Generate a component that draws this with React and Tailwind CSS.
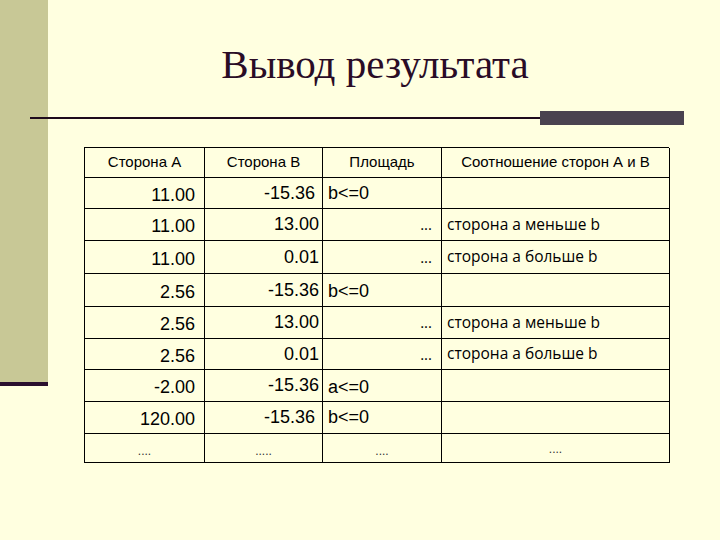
const rows = [
  { h: 'h-[31px]', a: '11.00', b: '-15.36', bPad: 'pr-[7px]', c: 'b<=0', cPad: 'pt-0', d: '' },
  { h: 'h-[32px]', a: '11.00', b: '13.00', bPad: 'pr-[3px]', c: '...', d: 'сторона а меньше b' },
  { h: 'h-[33px]', a: '11.00', b: '0.01', bPad: 'pr-[3px]', c: '...', d: 'сторона а больше b' },
  { h: 'h-[33px]', a: '2.56', b: '-15.36', bPad: 'pr-[3px]', c: 'b<=0', cPad: 'pt-[3px]', d: '' },
  { h: 'h-[32px]', a: '2.56', b: '13.00', bPad: 'pr-[3px]', c: '...', d: 'сторона а меньше b' },
  { h: 'h-[31px]', a: '2.56', b: '0.01', bPad: 'pr-[3px]', c: '...', d: 'сторона а больше b' },
  { h: 'h-[32px]', a: '-2.00', b: '-15.36', bPad: 'pr-[3px]', c: 'a<=0', cPad: 'pt-[3px]', d: '' },
  { h: 'h-[32px]', a: '120.00', b: '-15.36', bPad: 'pr-[7px]', c: 'b<=0', cPad: 'pt-0', d: '' },
];

const cell = 'border-r border-b border-black flex items-center';

function DataRow({ r }) {
  const isDots = r.c === '...';
  return (
    <>
      <div className={`${cell} ${r.h} justify-end pr-[9px] pt-[4px] text-[18px]`}>{r.a}</div>
      <div className={`${cell} ${r.h} justify-end ${r.bPad} text-[18px]`}>{r.b}</div>
      {isDots ? (
        <div className={`${cell} ${r.h} justify-end pr-[9px] font-['Open_Sans',sans-serif] text-[15px]`}>...</div>
      ) : (
        <div className={`${cell} ${r.h} pl-[5px] ${r.cPad} text-[18px]`}>{r.c}</div>
      )}
      <div className={`${cell} ${r.h} pl-[5px] font-['Open_Sans',sans-serif] text-[15.5px]`}>{r.d}</div>
    </>
  );
}

export default function App() {
  return (
    <div className="flex h-[540px] w-[720px] overflow-hidden bg-[#ffffe0] font-['Liberation_Sans',Arial,sans-serif] text-black">
      <aside className="flex w-[48px] shrink-0 flex-col">
        <div className="h-[382px] bg-[#c8c896]" />
        <div className="h-[4px] bg-[#2a0f2e]" />
      </aside>

      <main className="flex min-w-0 flex-1 flex-col">
        <h1 className="-ml-[18px] mt-[42px] text-center font-['Liberation_Serif','Times_New_Roman',serif] text-[41px] leading-[44px] text-[#2a0c26]">
          Вывод результата
        </h1>

        <div className="-ml-[18px] mt-[25px] flex h-[14px] items-center">
          <div className="h-[2px] w-[510px] bg-[#1e0a1c]" />
          <div className="h-[14px] w-[144px] bg-[#4a4250]" />
        </div>

        <div className="ml-[36px] mt-[22px] grid w-[585px] grid-cols-[120px_118px_119px_228px] border-l border-t border-black">
          <div className={`${cell} h-[30px] justify-center text-[15px]`}>Сторона А</div>
          <div className={`${cell} h-[30px] justify-center text-[15px]`}>Сторона В</div>
          <div className={`${cell} h-[30px] justify-center text-[15px]`}>Площадь</div>
          <div className={`${cell} h-[30px] justify-center text-[15px]`}>Соотношение сторон А и В</div>

          {rows.map((r, i) => (
            <DataRow key={i} r={r} />
          ))}

          <div className={`${cell} h-[29px] justify-center pt-[6px] text-[12px] text-[#333]`}>....</div>
          <div className={`${cell} h-[29px] justify-center pt-[6px] text-[12px] text-[#333]`}>.....</div>
          <div className={`${cell} h-[29px] justify-center pt-[6px] text-[12px] text-[#333]`}>....</div>
          <div className={`${cell} h-[29px] justify-center pt-[2px] text-[12px] text-[#333]`}>....</div>
        </div>
      </main>
    </div>
  );
}
